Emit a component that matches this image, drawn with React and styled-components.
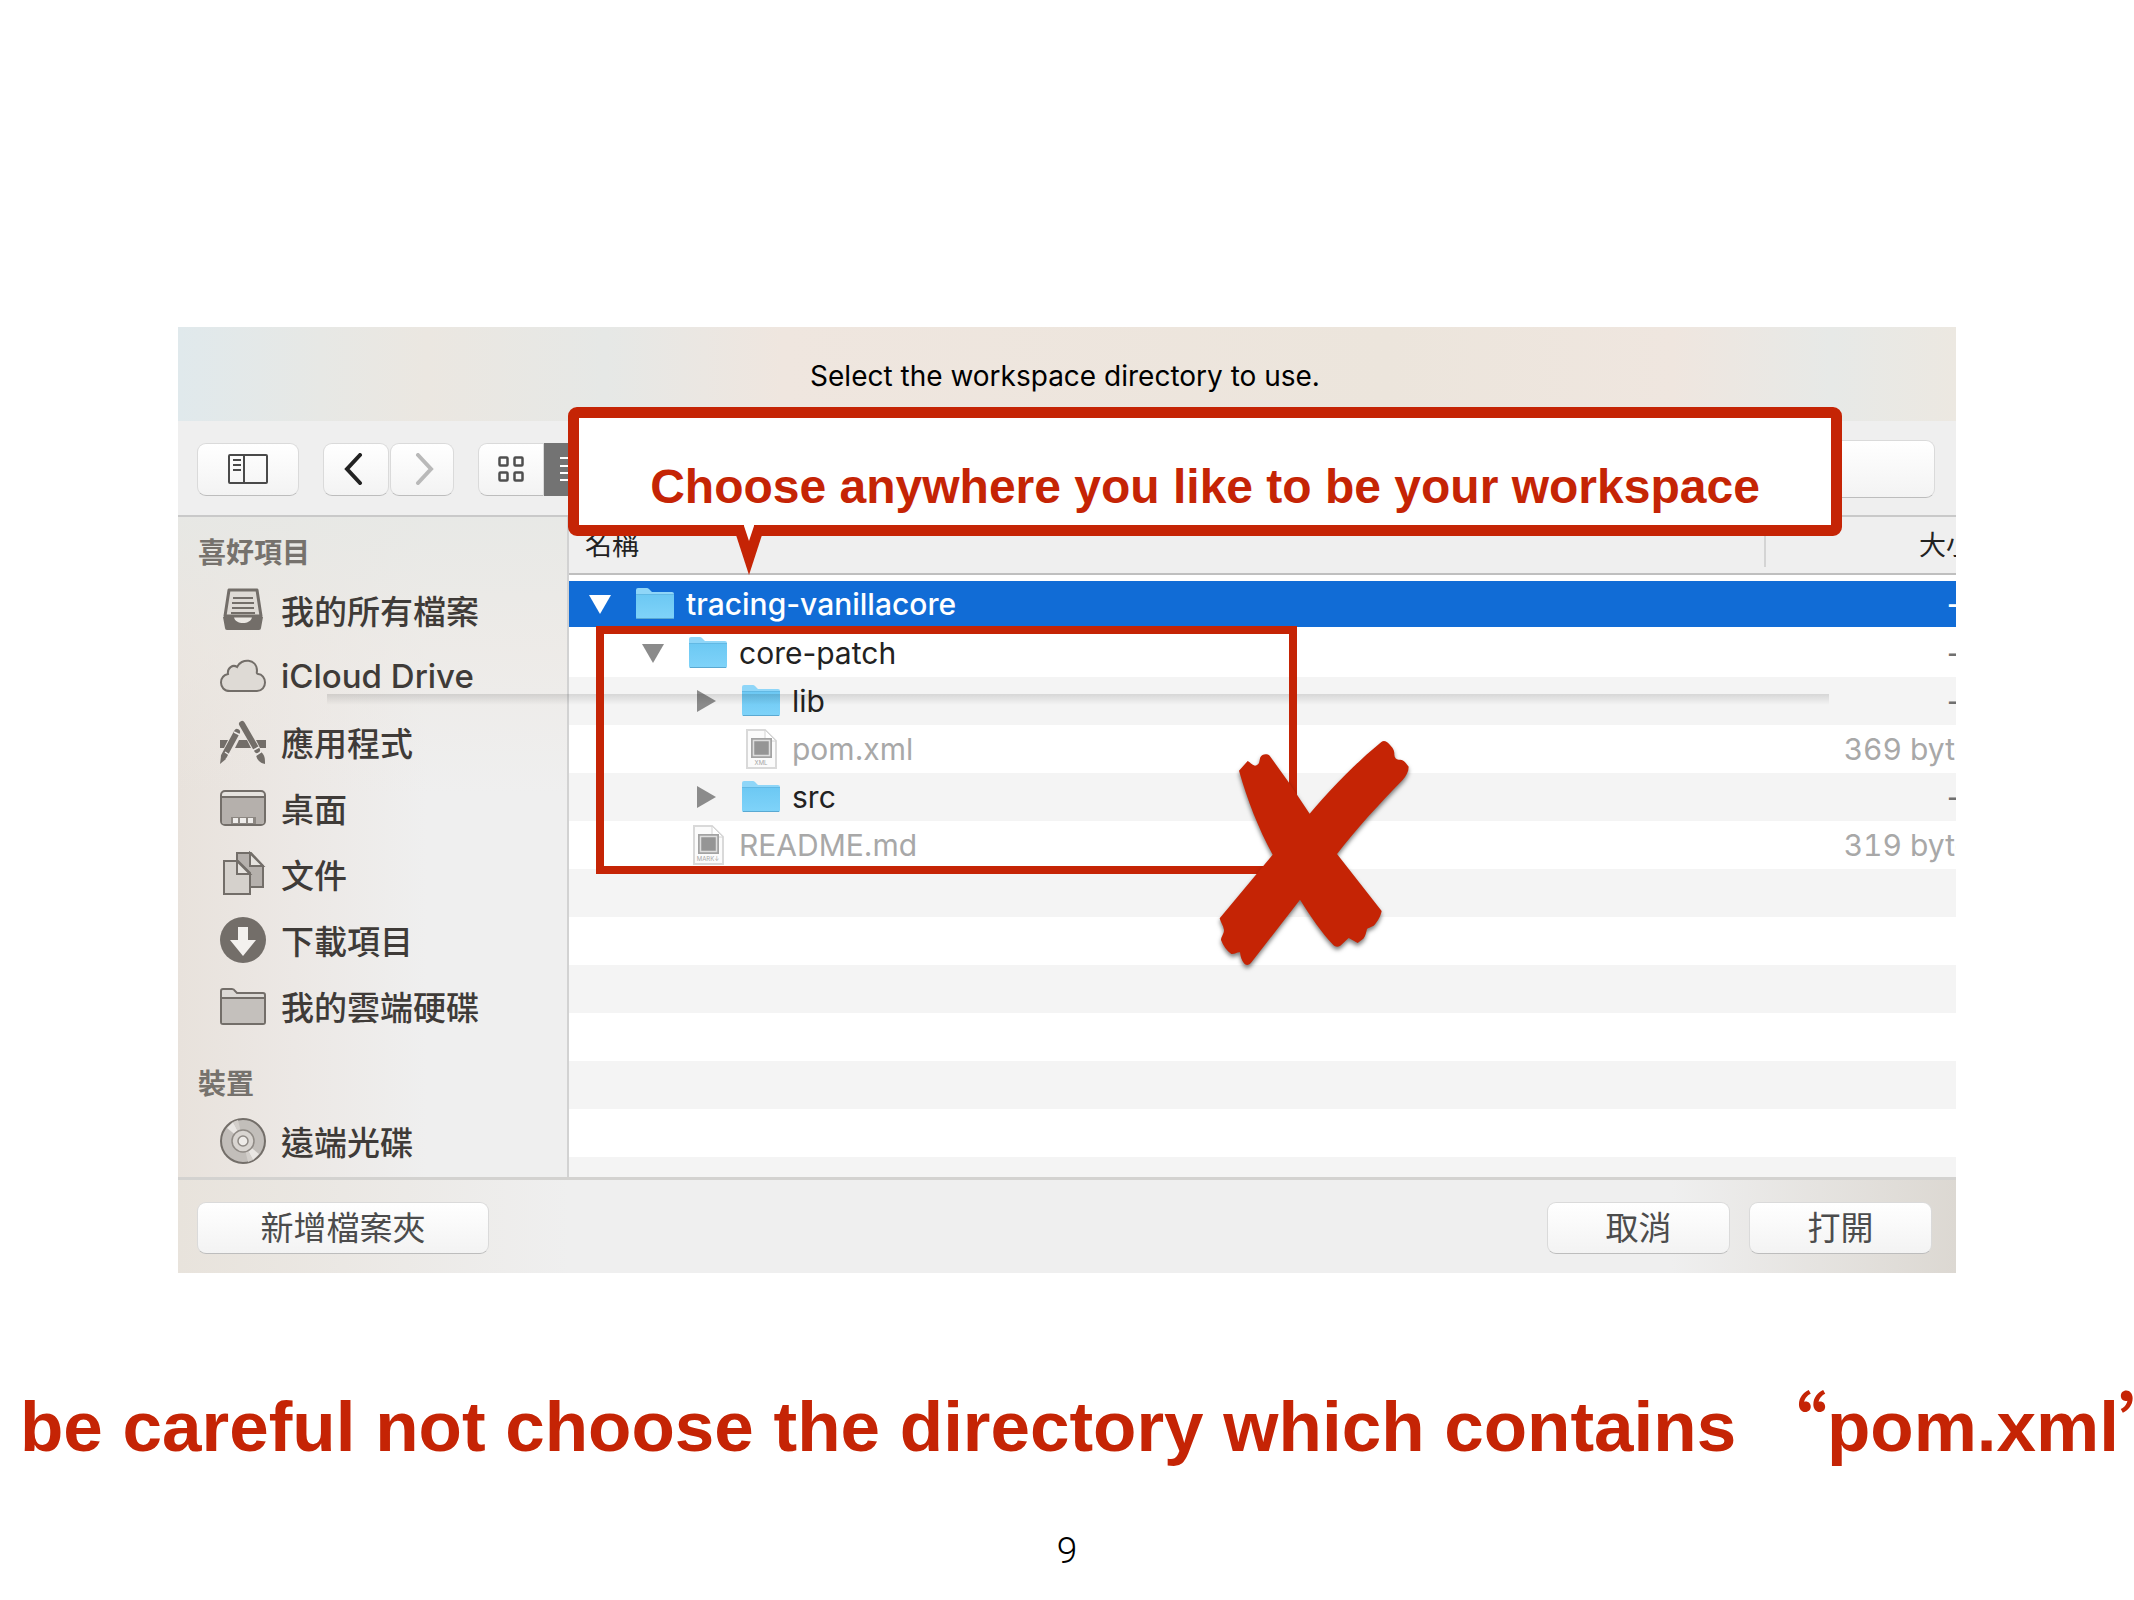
import React from "react";
import styled, { createGlobalStyle, css } from "styled-components";

const RED = "#c52405";

const places = [
	{ name: "我的所有檔案", icon: "all" },
	{ name: "iCloud Drive", icon: "cloud" },
	{ name: "應用程式", icon: "apps" },
	{ name: "桌面", icon: "desktop" },
	{ name: "文件", icon: "docs" },
	{ name: "下載項目", icon: "downloads" },
	{ name: "我的雲端硬碟", icon: "folder" },
];

const files = [
	{ name: "tracing-vanillacore", depth: 0, open: true, size: "--", selected: true },
	{ name: "core-patch", depth: 1, open: true, size: "--" },
	{ name: "lib", depth: 2, open: false, size: "--" },
	{ name: "pom.xml", depth: 2, kind: "XML", size: "369 bytes" },
	{ name: "src", depth: 2, open: false, size: "--" },
	{ name: "README.md", depth: 1, kind: "MARK↓", size: "319 bytes" },
];

const emptyRows = [0, 1, 2, 3, 4, 5, 6];

const placeIcons = {
	all: (
		<>
			<path d="M9 3h28l4 26H5z" fill="#dedad5" stroke="#736e69" strokeWidth="3" strokeLinejoin="round" />
			<path d="M13 11h20M12 16h22M12 21h22M11 26h24" stroke="#736e69" strokeWidth="2" />
			<path d="M3 30h11c1 8 17 8 18 0h11l-2 11q0 2-2 2H7q-2 0-2-2z" fill="#736e69" />
		</>
	),
	cloud: (
		<path
			d="M10 38C4 38 1 34 1 29.500C1 25 4 22 8 21C7 15 13 11 17 14C21 5 37 5 37 18C36.500 20 37 21 38 21C42 21 45 25 45 29.500C45 34 42 38 37 38Z"
			fill="#dedad5"
			stroke="#736e69"
			strokeWidth="2"
		/>
	),
	apps: (
		<>
			<path d="M0 21h8l-4 8H0zM19 21h8l4 8H15zM36 21h10v8h-6z" fill="#736e69" />
			<path d="M17 13L4 37" stroke="#736e69" strokeWidth="6" strokeLinecap="round" />
			<path d="M0 45l1-8 5 3z" fill="#736e69" />
			<path d="M22 5L37 31" stroke="#736e69" strokeWidth="6" strokeLinecap="round" />
			<path d="M36 36l5-3c4 3 4 7 4 12-5-1-8-4-9-9z" fill="#736e69" />
			<path d="M14 13l6 3M5 33l6 4M32 32l7-4M35 37l6-4" stroke="#eeebe8" strokeWidth="1.500" />
		</>
	),
	desktop: (
		<>
			<rect x="1" y="6" width="44" height="34" rx="4" fill="#e6e3df" stroke="#736e69" strokeWidth="2" />
			<path d="M2 12h42v25q0 2-2 2H4q-2 0-2-2z" fill="#b5b0ac" />
			<path d="M2 12h42" stroke="#736e69" strokeWidth="2" />
			<path d="M11 32h25v7H11z" fill="#8c8782" />
			<path d="M13 33h5v5h-5zM20 33h6v5h-6zM28 33h5v5h-5z" fill="#efedeb" />
		</>
	),
	docs: (
		<>
			<path d="M17 2h14l12 13v21H17z" fill="#b5b0ac" stroke="#736e69" strokeWidth="2" />
			<path d="M30 2v13h13z" fill="#e6e3df" stroke="#736e69" strokeWidth="2" />
			<path d="M4 10h14l12 12v21H4z" fill="#d5d1cc" stroke="#736e69" strokeWidth="2" />
			<path d="M17 10v13h13z" fill="#e6e3df" stroke="#736e69" strokeWidth="2" />
		</>
	),
	downloads: (
		<>
			<circle cx="23" cy="23" r="23" fill="#736e69" />
			<path d="M18 10h10v13h8L23 39 10 23h8z" fill="#f3f1ee" />
		</>
	),
	folder: (
		<>
			<path d="M1 39V8q0-2 2-2h9q2 0 3 2l2 2h26q2 0 2 2v27q0 2-2 2H3q-2 0-2-2z" fill="#dcd9d5" stroke="#736e69" strokeWidth="2" />
			<path d="M2 15h42v25H2z" fill="#c4c0bc" />
			<path d="M1 15h44" stroke="#736e69" strokeWidth="2" />
		</>
	),
	disc: (
		<>
			<circle cx="23" cy="23" r="22" fill="#c2beba" stroke="#736e69" strokeWidth="2" />
			<path d="M23 23L7 10l6-6zM23 23l16 13-6 6z" fill="#e9e6e3" />
			<path d="M23 23L13 4l5-2zM23 23l10 19 -5 2z" fill="#d3cfcb" />
			<circle cx="23" cy="23" r="11" fill="#d9d5d1" stroke="#8f8a85" strokeWidth="1.500" />
			<circle cx="23" cy="23" r="5" fill="#eeebe8" stroke="#8f8a85" strokeWidth="1.500" />
		</>
	),
};

const PlaceIcon = ({ name }) => (
	<svg width="46" height="46" viewBox="0 0 46 46" fill="none" aria-hidden="true">
		{placeIcons[name]}
	</svg>
);

const FolderIcon = () => (
	<svg width="38" height="32" viewBox="0 0 38 32" aria-hidden="true">
		<defs>
			<linearGradient id="folder" x1="0" y1="0" x2="0" y2="1">
				<stop offset="0" stopColor="#6cc8f3" />
				<stop offset="1" stopColor="#7fd3f9" />
			</linearGradient>
		</defs>
		<path d="M0 29V2q0-2 2-2h9q1 0 2 1l3 3h20q2 0 2 2v23z" fill="#8fd6f8" />
		<path d="M0 6h38v23q0 2-1 2H1q-1 0-1-2z" fill="url(#folder)" />
		<path d="M0 6.500h38" stroke="#62b9e4" />
		<path d="M1 30.500h36" stroke="#5aa9d2" />
	</svg>
);

const FileIcon = ({ kind }) => (
	<svg width="38" height="40" viewBox="0 0 38 40" aria-hidden="true">
		<path d="M5 1h18l11 11v27H5z" fill="#fbfbfb" stroke="#d9d9d9" strokeWidth="2" />
		<path d="M23 1v11h11z" fill="#fff" stroke="#d4d4d4" />
		<rect x="9" y="9" width="21" height="20" fill="#a3a3a3" />
		<rect x="11.500" y="11.500" width="16" height="15" fill="#959595" stroke="#dedede" strokeWidth="1.500" />
		<text x="19" y="36" textAnchor="middle" fontSize="6" fontFamily="Inter, sans-serif" fill="#a5a5a5">{kind}</text>
	</svg>
);

const Arrow = ({ open }) => (
	<svg width="24" height="24" viewBox="0 0 24 24" fill="currentColor" aria-hidden="true">
		<path d={open ? "M1 3h22L12 22z" : "M3 1v22l19-11z"} />
	</svg>
);

const FileRow = ({ file }) => (
	<Row $selected={file.selected} $muted={file.kind}>
		<td>
			<NameCell $depth={file.depth}>
				{file.kind ? <Slot /> : (
					<Disclosure type="button" aria-label={file.name} aria-expanded={file.open}>
						<Arrow open={file.open} />
					</Disclosure>
				)}
				{file.kind ? <FileIcon kind={file.kind} /> : <FolderIcon />}
				<span>{file.name}</span>
			</NameCell>
		</td>
		<SizeCell $bytes={file.kind}>{file.size}</SizeCell>
	</Row>
);

const App = () => {
	return (
		<Slide>
			<GlobalStyle />
			<Dialog>
				<Title>Select the workspace directory to use.</Title>
				<Toolbar>
					<ToolButton type="button" $width={102} aria-label="側邊欄">
						<svg width="40" height="30" viewBox="0 0 40 30" fill="none" stroke="#4a4a4a" strokeWidth="2">
							<rect x="1" y="1" width="38" height="28" rx="1" />
							<path d="M16 1v28M5 6h8M5 11h8M5 16h8" />
						</svg>
					</ToolButton>
					<Group>
						<ToolButton type="button" $width={66} aria-label="上一頁">
							<svg width="24" height="32" viewBox="0 0 24 32" fill="none" stroke="#222" strokeWidth="4" strokeLinecap="round">
								<path d="M16 2L3 16l13 14" />
							</svg>
						</ToolButton>
						<ToolButton type="button" $width={64} aria-label="下一頁" disabled>
							<svg width="24" height="32" viewBox="0 0 24 32" fill="none" stroke="#b9b9b9" strokeWidth="4" strokeLinecap="round">
								<path d="M8 2l13 14L8 30" />
							</svg>
						</ToolButton>
					</Group>
					<Views>
						<ToolButton type="button" $width={66} $joined aria-label="圖像">
							<svg width="26" height="26" viewBox="0 0 26 26" fill="none" stroke="#4f4f4f" strokeWidth="2.500">
								<rect x="1.500" y="1.500" width="8" height="8" rx="1" />
								<rect x="16.500" y="1.500" width="8" height="8" rx="1" />
								<rect x="1.500" y="16.500" width="8" height="8" rx="1" />
								<rect x="16.500" y="16.500" width="8" height="8" rx="1" />
							</svg>
						</ToolButton>
						<ToolButton type="button" $width={66} $active aria-label="列表">
							<svg width="34" height="26" viewBox="0 0 34 26" stroke="#fff" strokeWidth="2">
								<path d="M0 2h34M0 10h34M0 17h34M0 24h34" />
							</svg>
						</ToolButton>
					</Views>
					<Search type="text" aria-label="搜尋" />
				</Toolbar>

				<Body>
					<Sidebar>
						<SideTitle>喜好項目</SideTitle>
						{places.map((place) => (
							<Place href="#" key={place.name}>
								<PlaceIcon name={place.icon} />
								{place.name}
							</Place>
						))}
						<SideTitle $spaced>裝置</SideTitle>
						<Place href="#">
							<PlaceIcon name="disc" />
							遠端光碟
						</Place>
					</Sidebar>
					<Browser>
						<Table>
							<thead>
								<tr>
									<HeadCell>名稱</HeadCell>
									<HeadCell $size>大小</HeadCell>
								</tr>
							</thead>
							<tbody>
								{files.map((file) => <FileRow file={file} key={file.name} />)}
								{emptyRows.map((n) => <Row key={n}><td colSpan={2} /></Row>)}
							</tbody>
						</Table>
					</Browser>
				</Body>

				<Footer>
					<FooterButton type="button" $wide>新增檔案夾</FooterButton>
					<FooterButton type="button">取消</FooterButton>
					<FooterButton type="button">打開</FooterButton>
				</Footer>

				<Shade />
				<WrongArea />
				<Cross viewBox="0 0 900 900" aria-hidden="true">
					<path d="M237 212L263 183C270 186 275 195 285 197C300 195 297 185 301 172C306 161 322 161 329 167L385 245L449 341C510 270 580 195 664 126C672 120 682 125 688 133C700 146 702 150 703 160C702 172 708 178 716 179C730 179 735 184 746 200C746 215 738 228 728 240C660 310 590 385 531 462L665 633C662 650 652 665 644 674C636 682 626 682 621 687C618 697 618 706 610 716L593 729L566 714L541 737C533 742 526 741 520 735C485 698 452 650 420 599L275 786C268 796 258 798 252 790C245 782 242 772 240 757C232 755 225 763 214 762C200 752 190 738 183 720C184 708 192 702 192 690C190 676 182 668 179 655L338 464C295 385 262 300 237 212Z" />
				</Cross>
				<Callout>
					Choose anywhere you like to be your workspace
					<Tail viewBox="0 0 26 50" aria-hidden="true">
						<path d="M0 10L13 50 26 10z" fill={RED} />
						<path d="M8 0v1L13 16 18 1V0z" fill="#fff" />
					</Tail>
				</Callout>
			</Dialog>
			<Warning>
				be careful not choose the directory which contains <Quote>“</Quote>pom.xml<Quote>”</Quote>
			</Warning>
			<PageNumber>9</PageNumber>
		</Slide>
	);
};

export default App;

const GlobalStyle = createGlobalStyle`
	* {
		box-sizing: border-box;
	}
	body {
		margin: 0;
		background: #fff;
	}
	button, input {
		font: inherit;
		margin: 0;
		padding: 0;
	}
`;

const Slide = styled.main`
	display: flex;
	flex-direction: column;
	min-height: 100vh;
	padding-top: 327px;
	overflow: hidden;
	font-family: Inter, "Noto Sans CJK TC", sans-serif;
`;

const Dialog = styled.section`
	position: relative;
	margin: 0 178px;
	background: #efefef;
`;

const Title = styled.h1`
	display: flex;
	align-items: center;
	justify-content: center;
	height: 94px;
	margin: 0;
	padding: 4px 4px 0 0;
	background: linear-gradient(90deg, #e0e9ec 0%, #e7e8e5 8%, #ebe7e1 14%, #e6e8e6 24%, #efe6df 34%, #ece5dc 68%, #efe6df 84%, #e7e9e7 93%, #ece8e1 100%);
	font-size: 28px;
	font-weight: 400;
	color: #000;
`;

const Toolbar = styled.div`
	display: flex;
	align-items: center;
	height: 96px;
	padding: 2px 21px 0 19px;
	gap: 24px;
	border-bottom: 2px solid #c9c9c9;
`;

const Group = styled.div`
	display: flex;
	gap: 1px;
`;

const Views = styled.div`
	display: flex;
`;

const raised = css`
	background: linear-gradient(#fff, #f3f3f3);
	border: 1px solid #dadada;
	border-bottom-color: #bdbdbd;
	border-radius: 9px;
`;

const ToolButton = styled.button`
	${raised}
	display: flex;
	align-items: center;
	justify-content: center;
	width: ${(p) => p.$width}px;
	height: 53px;
	${(p) => p.$joined && "border-radius: 9px 0 0 9px;"}
	${(p) => p.$active && "background: #737373; border-color: #737373; border-radius: 0;"}
`;

const Search = styled.input`
	${raised}
	width: 400px;
	height: 58px;
	margin-left: auto;
`;

const Body = styled.div`
	display: grid;
	grid-template-columns: 391px minmax(0, 1fr);
	height: 660px;
`;

const Sidebar = styled.nav`
	padding-top: 16px;
	border-right: 2px solid #d2d2d2;
	background:
		linear-gradient(180deg, rgba(231, 232, 229, 0.9), rgba(236, 232, 227, 0.6) 20%, rgba(239, 239, 239, 0) 42%),
		linear-gradient(90deg, #e8e2dc, #ece8e5 30%, #efefef 64%);
	overflow: hidden;
`;

const SideTitle = styled.h2`
	margin: ${(p) => (p.$spaced ? "25px" : "0")} 0 4px;
	padding-left: 20px;
	font-size: 28px;
	line-height: 40px;
	font-weight: 700;
	color: #76726d;
`;

const Place = styled.a`
	display: flex;
	align-items: center;
	gap: 15px;
	height: 66px;
	padding-left: 42px;
	font-size: 33px;
	font-weight: 500;
	color: #3f3b38;
	text-decoration: none;
	white-space: nowrap;
`;

const Browser = styled.div`
	background: #fff;
	overflow: hidden;
`;

/* runs past the panel, the size column is cut by its edge */
const Table = styled.table`
	width: calc(100% + 40px);
	table-layout: fixed;
	border-spacing: 0;
	font-size: 30px;
	tbody::before {
		content: "";
		display: block;
		height: 6px;
	}
	td {
		height: 48px;
		padding: 0;
	}
`;

const HeadCell = styled.th`
	width: ${(p) => (p.$size ? "232px" : "auto")};
	height: 58px;
	padding: 2px ${(p) => (p.$size ? "23px" : "0")} 0 16px;
	background: #efefef;
	border-bottom: 2px solid #bfbfbf;
	font-size: 27px;
	line-height: 40px;
	font-weight: 400;
	text-align: ${(p) => (p.$size ? "right" : "left")};
	color: #222;
	${(p) => p.$size && `
		background: linear-gradient(#d4d4d4, #d4d4d4) 0 0 / 2px 50px no-repeat #efefef;
	`}
`;

const Row = styled.tr`
	color: ${(p) => (p.$muted ? "#a8a8a8" : "#222")};
	&:nth-child(odd) {
		background: #f4f4f4;
	}
	${(p) => p.$selected && css`
		&& {
			background: #116cd6;
			color: #fff;
			font-weight: 500;
		}
		td {
			border-bottom: 2px solid #fff;
		}
	`}
`;

const NameCell = styled.div`
	display: flex;
	align-items: center;
	height: 46px;
	padding-left: ${(p) => 19 + p.$depth * 53}px;
	span {
		margin-left: 12px;
	}
`;

const Slot = styled.i`
	width: 24px;
	margin-right: 24px;
`;

const Disclosure = styled.button`
	display: flex;
	margin-right: 24px;
	border: 0;
	background: none;
	color: #8b8b8b;
	${Row}:first-child & {
		color: #fff;
	}
`;

const SizeCell = styled.td`
	&& {
		padding-right: ${(p) => (p.$bytes ? "8px" : "13px")};
	}
	font-variant-numeric: tabular-nums;
	text-align: right;
	color: ${(p) => (p.$bytes ? "inherit" : "#707070")};
	${Row}:first-child & {
		color: #fff;
	}
`;

const Footer = styled.footer`
	display: flex;
	gap: 19px;
	height: 96px;
	padding: 22px 24px 0 19px;
	border-top: 3px solid #d3d2d0;
	background: linear-gradient(90deg, #e8e3dc, #efefef 22%, #efefef 84%, #dcd8d2);
`;

const FooterButton = styled.button`
	${raised}
	width: ${(p) => (p.$wide ? "292px" : "183px")};
	height: 52px;
	margin-right: ${(p) => (p.$wide ? "auto" : "0")};
	font-size: 33px;
	line-height: 48px;
	color: #4c4c4c;
`;

const Shade = styled.div`
	position: absolute;
	top: 367px;
	left: 149px;
	right: 127px;
	height: 11px;
	background: linear-gradient(rgba(0, 0, 0, 0.12), rgba(0, 0, 0, 0));
`;

const WrongArea = styled.div`
	position: absolute;
	top: 299px;
	left: 418px;
	width: 701px;
	height: 248px;
	border: 8px solid ${RED};
`;

const Cross = styled.svg`
	position: absolute;
	top: 373px;
	left: 982px;
	width: 300px;
	height: 300px;
	fill: ${RED};
	filter: drop-shadow(0 3px 2px rgba(0, 0, 0, 0.5));
`;

const Callout = styled.div`
	position: absolute;
	top: 80px;
	left: 390px;
	right: 114px;
	display: flex;
	align-items: center;
	justify-content: center;
	height: 129px;
	padding-top: 30px;
	border: 11px solid ${RED};
	border-radius: 9px;
	background: #fff;
	font-family: "Liberation Sans", Arial, sans-serif;
	font-size: 48px;
	font-weight: 700;
	line-height: 56px;
	color: ${RED};
	white-space: nowrap;
`;

const Tail = styled.svg`
	position: absolute;
	top: 107px;
	left: 157px;
	width: 26px;
	height: 50px;
`;

const Warning = styled.p`
	margin: 112px 0 0 20px;
	font-family: "Liberation Sans", Arial, sans-serif;
	font-size: 71px;
	font-weight: 700;
	line-height: 80px;
	color: ${RED};
	white-space: nowrap;
`;

const Quote = styled.span`
	font-family: "Noto Sans CJK TC", sans-serif;
	line-height: 1;
`;

const PageNumber = styled.footer`
	margin-top: 60px;
	font-family: Roboto, sans-serif;
	font-size: 37px;
	font-weight: 300;
	line-height: 48px;
	text-align: center;
	color: #000;
`;
